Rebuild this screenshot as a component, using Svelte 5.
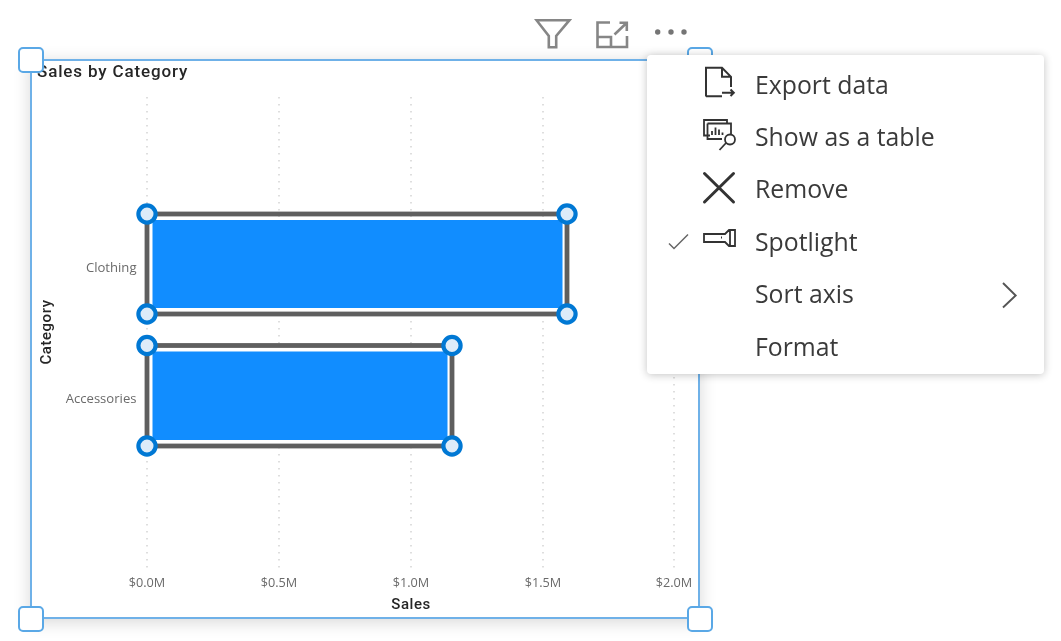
<script>
  const grid = [147, 279, 411, 543, 674];
  const ticks = ['$0.0M', '$0.5M', '$1.0M', '$1.5M', '$2.0M'];
  const bars = [
    { label: 'Clothing', right: 567, top: 214, bottom: 314 },
    { label: 'Accessories', right: 452, top: 345.5, bottom: 446 }
  ];
  const handles = ['tl', 'tr', 'bl', 'br'];
</script>

<div class="page">
  <div class="toolbar">
    <svg class="tool" viewBox="0 0 38 34" aria-label="Filter">
      <path d="M2.5 4.2H35.5L22.2 20V31.3H14.8V20Z" />
    </svg>
    <svg class="tool" viewBox="0 0 38 34" aria-label="Focus mode">
      <path d="M17 6.5H4.5V31H34V20M4.5 21H18V31M21.5 18.5L33.8 6.8M26.5 6.8H33.8V15" />
    </svg>
    <svg class="tool" viewBox="0 0 38 34" aria-label="More options">
      <circle cx="5.7" cy="16" r="2.7" class="dot" />
      <circle cx="19" cy="16" r="2.7" class="dot" />
      <circle cx="32" cy="16" r="2.7" class="dot" />
    </svg>
  </div>

  <div class="visual">
    <div class="title">Sales by Category</div>
    <svg class="chart" viewBox="32 61 666 556">
      {#each grid as x}
        <line class="grid" x1={x} x2={x} y1="97" y2="570" />
      {/each}
      {#each bars as b}
        <rect class="outline" x="147" y={b.top} width={b.right - 147} height={b.bottom - b.top} />
        <rect class="inner" x="150" y={b.top + 3} width={b.right - 153} height={b.bottom - b.top - 6} />
        <rect class="fill" x="152.5" y={b.top + 6} width={b.right - 157} height={b.bottom - b.top - 12} />
        <text class="cat" x="136.5" y={(b.top + b.bottom) / 2 + 7.5}>{b.label}</text>
        {#each [[147, b.top], [b.right, b.top], [147, b.bottom], [b.right, b.bottom]] as [cx, cy]}
          <circle class="knob" {cx} {cy} r="8.6" />
        {/each}
      {/each}
      {#each ticks as t, i}
        <text class="tick" x={grid[i]} y="586.5">{t}</text>
      {/each}
      <text class="axis" x="411" y="609">Sales</text>
      <text class="axis" transform="translate(51 332) rotate(-90)">Category</text>
    </svg>
    {#each handles as h}
      <span class="handle {h}"></span>
    {/each}
  </div>

  <div class="menu">
    <div class="item">
      <span class="check"></span>
      <svg class="icon" viewBox="0 0 36 36">
        <path d="M3 29.5V0.8H19L28 9.8V20M19 0.8V9.8H28M3 29.3H19M19 25.7H30.5M27.5 22.5L30.8 25.7L27.5 29" />
      </svg>
      <span class="label">Export data</span>
    </div>
    <div class="item">
      <span class="check"></span>
      <svg class="icon thin" viewBox="0 0 36 36">
        <path d="M7 15.5H1V0H24V3.5M4.5 3.5H28V15M4.5 3.5V19H19M9 15V11M12.5 15V7.5M16 15V9.5M19.5 15V12.5" />
        <circle cx="27" cy="19.5" r="5" />
        <path d="M23 23L16.5 30" />
      </svg>
      <span class="label">Show as a table</span>
    </div>
    <div class="item">
      <span class="check"></span>
      <svg class="icon heavy" viewBox="0 0 36 36">
        <path d="M1.5 1.5L30.5 30M30.5 1.5L1.5 30" />
      </svg>
      <span class="label">Remove</span>
    </div>
    <div class="item">
      <svg class="check tick-mark" viewBox="0 0 22 30">
        <path d="M2 16.5L7 21.5L21 7.5" />
      </svg>
      <svg class="icon thin" viewBox="0 0 36 36">
        <path d="M1 10H22L26 6H32V22H26L22 18H1ZM27 6V22" />
        <path d="M18 13.5H19" />
      </svg>
      <span class="label">Spotlight</span>
    </div>
    <div class="item">
      <span class="check"></span>
      <span class="icon"></span>
      <span class="label">Sort axis</span>
      <svg class="chevron" viewBox="0 0 20 30">
        <path d="M3 3L15.7 15.5L3 27.5" />
      </svg>
    </div>
    <div class="item">
      <span class="check"></span>
      <span class="icon"></span>
      <span class="label">Format</span>
    </div>
  </div>
</div>

<style>
  :global(body) {
    margin: 0;
    background: #fff;
  }
  .page {
    position: relative;
    width: 1061px;
    height: 641px;
    overflow: hidden;
    background: #fff;
    filter: blur(0.35px);
  }
  .toolbar {
    display: flex;
    gap: 21px;
    height: 59px;
    box-sizing: border-box;
    padding: 16px 0 0 534px;
  }
  .tool {
    width: 38px;
    height: 34px;
    fill: none;
    stroke: #868686;
    stroke-width: 2.6;
  }
  .tool .dot {
    fill: #757575;
    stroke: none;
  }
  .visual {
    position: relative;
    width: 670px;
    height: 560px;
    box-sizing: border-box;
    margin-left: 30px;
    border: 2px solid #6fb1e8;
    background: #fff;
    box-shadow: 0 3px 16px rgba(0, 0, 0, 0.16);
  }
  .title {
    position: absolute;
    left: 5px;
    top: 0;
    font: 500 17px/20px Roboto, "Liberation Sans", sans-serif;
    letter-spacing: 0.85px;
    color: #262626;
  }
  .chart {
    display: block;
    width: 666px;
    height: 556px;
  }
  .grid {
    stroke: #d4d4d4;
    stroke-width: 1.5;
    stroke-dasharray: 1.5 5.5;
  }
  .outline {
    fill: none;
    stroke: #5f5f5f;
    stroke-width: 4.8;
  }
  .inner {
    fill: #fff;
  }
  .fill {
    fill: #118dff;
  }
  .knob {
    fill: #deecf9;
    stroke: #0078d4;
    stroke-width: 4.2;
  }
  .cat,
  .tick {
    font: 12.7px "Open Sans", sans-serif;
    fill: #6a6a6a;
  }
  .cat {
    font-size: 13.1px;
    text-anchor: end;
  }
  .tick {
    text-anchor: middle;
  }
  .axis {
    font: 500 15px Roboto, sans-serif;
    letter-spacing: 0.55px;
    fill: #262626;
    text-anchor: middle;
  }
  .handle {
    position: absolute;
    width: 26px;
    height: 26px;
    box-sizing: border-box;
    border: 2px solid #5aa8e6;
    border-radius: 5px;
    background: #fff;
  }
  .tl {
    left: -14px;
    top: -14px;
  }
  .tr {
    right: -15px;
    top: -14px;
  }
  .bl {
    left: -14px;
    bottom: -15px;
  }
  .br {
    right: -15px;
    bottom: -15px;
  }
  .menu {
    position: absolute;
    left: 647px;
    top: 55px;
    width: 397px;
    height: 319px;
    box-sizing: border-box;
    padding: 4px 24px 0 20px;
    background: #fff;
    border-radius: 4px;
    box-shadow: 0 1px 8px rgba(0, 0, 0, 0.24);
    font: 24.8px "Open Sans", sans-serif;
    color: #3a3a3a;
  }
  .item {
    display: flex;
    align-items: center;
    height: 52.4px;
  }
  .label {
    margin-bottom: 3px;
  }
  .check {
    flex: none;
    width: 22px;
    height: 30px;
    margin-right: 14px;
  }
  .tick-mark {
    fill: none;
    stroke: #666;
    stroke-width: 1.5;
  }
  .icon {
    flex: none;
    width: 36px;
    height: 36px;
    margin-right: 16px;
    overflow: visible;
    fill: none;
    stroke: #333;
    stroke-width: 2;
  }
  .icon.thin {
    stroke-width: 1.8;
  }
  .icon.heavy {
    stroke-width: 3;
    stroke-linecap: round;
  }
  .chevron {
    width: 20px;
    height: 30px;
    margin-left: auto;
    fill: none;
    stroke: #555;
    stroke-width: 1.9;
  }
</style>
